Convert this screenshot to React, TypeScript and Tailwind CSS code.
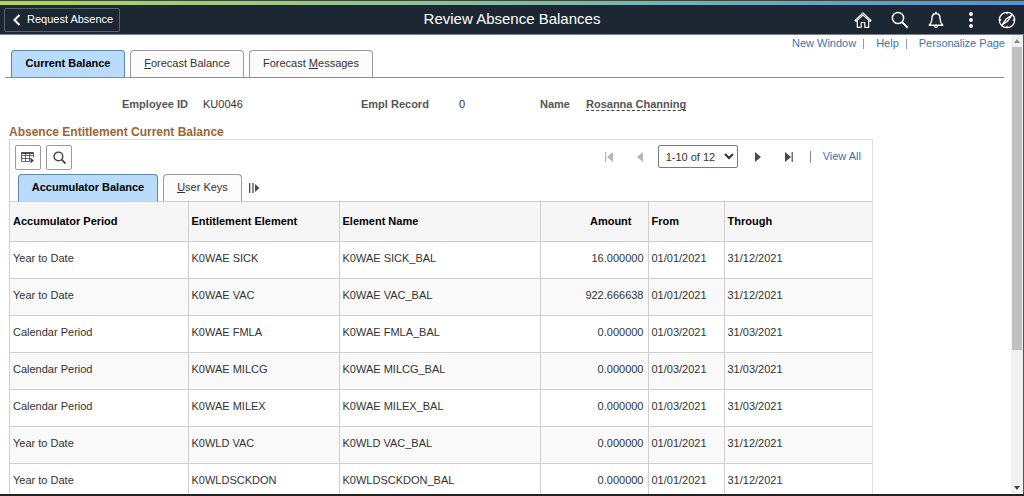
import { clsx } from "clsx";

type Balance = {
  period: string;
  element: string;
  name: string;
  amount: string;
  from: string;
  through: string;
};

const balances: Balance[] = [
  { period: "Year to Date", element: "K0WAE SICK", name: "K0WAE SICK_BAL", amount: "16.000000", from: "01/01/2021", through: "31/12/2021" },
  { period: "Year to Date", element: "K0WAE VAC", name: "K0WAE VAC_BAL", amount: "922.666638", from: "01/01/2021", through: "31/12/2021" },
  { period: "Calendar Period", element: "K0WAE FMLA", name: "K0WAE FMLA_BAL", amount: "0.000000", from: "01/03/2021", through: "31/03/2021" },
  { period: "Calendar Period", element: "K0WAE MILCG", name: "K0WAE MILCG_BAL", amount: "0.000000", from: "01/03/2021", through: "31/03/2021" },
  { period: "Calendar Period", element: "K0WAE MILEX", name: "K0WAE MILEX_BAL", amount: "0.000000", from: "01/03/2021", through: "31/03/2021" },
  { period: "Year to Date", element: "K0WLD VAC", name: "K0WLD VAC_BAL", amount: "0.000000", from: "01/01/2021", through: "31/12/2021" },
  { period: "Year to Date", element: "K0WLDSCKDON", name: "K0WLDSCKDON_BAL", amount: "0.000000", from: "01/01/2021", through: "31/12/2021" },
];

function Header() {
  return (
    <header className="shrink-0 border-b border-[#7b828a] bg-[#1c2733] text-white">
      <div className="h-[5px] border-t border-[#3c4a35] bg-linear-to-r from-[#b4d455] via-[#84bda6] to-[#5590dc]" />
      <div className="grid h-[29px] grid-cols-[1fr_auto_1fr] items-center">
        <button className="ml-1 flex h-6 w-[116px] items-center gap-1.5 rounded-xs border border-[#566370] pl-2 text-[11px]">
          <svg className="h-3 w-2" viewBox="0 0 8 12" fill="none" stroke="currentColor" strokeWidth="2">
            <path d="M6.5 1 1.5 6l5 5" />
          </svg>
          Request Absence
        </button>
        <h1 className="text-[15px]">Review Absence Balances</h1>
        <nav className="flex items-center justify-end gap-[19px] pr-2">
          <button aria-label="Home">
            <svg className="h-[18px] w-[18px]" viewBox="0 0 18 18" fill="none" stroke="currentColor" strokeWidth="1.2" strokeLinejoin="round">
              <path d="M1 9.4 9 2l8 7.4-1 1-7-6.3-7 6.3zM3.3 9.8v6.5h3.9v-4.8h3.6v4.8h3.9V9.8" />
            </svg>
          </button>
          <button aria-label="Search">
            <svg className="h-[18px] w-[18px]" viewBox="0 0 18 18" fill="none" stroke="currentColor" strokeWidth="1.5">
              <circle cx="7" cy="7" r="5.6" />
              <path d="m11 11 5.8 5.8" strokeWidth="1.8" />
            </svg>
          </button>
          <button aria-label="Notifications">
            <svg className="h-[18px] w-4" viewBox="0 0 16 18" fill="none" stroke="currentColor" strokeWidth="1.4" strokeLinejoin="round">
              <path d="M8 .8v1.7M1.3 14.3C3.3 12.3 4 10.5 4 7.3 4 4.3 5.7 2.5 8 2.5s4 1.8 4 4.8c0 3.2.7 5 2.7 7z" />
              <path d="M6.3 15.3a1.8 1.5 0 0 0 3.4 0" />
            </svg>
          </button>
          <button aria-label="Actions" className="px-1.5">
            <svg className="h-4 w-1" viewBox="0 0 4 16" fill="currentColor">
              <circle cx="2" cy="2" r="1.9" />
              <circle cx="2" cy="8" r="1.9" />
              <circle cx="2" cy="14" r="1.9" />
            </svg>
          </button>
          <button aria-label="Navigator">
            <svg className="h-[18px] w-[18px]" viewBox="0 0 18 18" fill="none" stroke="currentColor" strokeWidth="1.3">
              <circle cx="9" cy="9" r="7.7" />
              <path d="M9 1.4v1.8M9 14.8v1.8M1.4 9h1.8M14.8 9h1.8" />
              <path d="m14 4-4.1 5.9L4 14l4.1-5.9z" strokeLinejoin="round" />
            </svg>
          </button>
        </nav>
      </div>
    </header>
  );
}

function PageTabs() {
  const tab = "h-[27px] rounded-t-sm border border-b-0 pb-0.5 text-[11px]";
  return (
    <div className="ml-[5px] mr-[7px] flex gap-[5px] border-b border-[#8c8c8c] pl-1.5" role="tablist">
      <button role="tab" aria-selected="true" className={clsx(tab, "w-[114px] border-[#5d86b0] bg-[#b9dcfd] font-bold text-black")}>
        Current Balance
      </button>
      <button role="tab" aria-selected="false" className={clsx(tab, "w-[114px] border-[#9b9b9b] bg-[#fbfbfb]")}>
        <u>F</u>orecast Balance
      </button>
      <button role="tab" aria-selected="false" className={clsx(tab, "w-[124px] border-[#9b9b9b] bg-[#fbfbfb]")}>
        Forecast <u>M</u>essages
      </button>
    </div>
  );
}

function Pager() {
  return (
    <div className="flex items-center pb-0.5 text-[11px]">
      <button aria-label="First rows" disabled className="text-[#b5b5b5]">
        <svg className="h-2.5 w-2.5" viewBox="0 0 10 10" fill="currentColor">
          <path d="M1 0h1.2v10H1zM9 0v10L3 5z" />
        </svg>
      </button>
      <button aria-label="Previous rows" disabled className="ml-[22px] text-[#b5b5b5]">
        <svg className="h-2.5 w-2" viewBox="0 0 8 10" fill="currentColor">
          <path d="M7 0v10L1 5z" />
        </svg>
      </button>
      <select aria-label="Rows shown" className="ml-[14px] h-[23px] w-20 rounded-xs border border-[#7a7a7a] bg-white pl-[3px]">
        <option>1-10 of 12</option>
        <option>11-12 of 12</option>
      </select>
      <button aria-label="Next rows" className="ml-4 text-[#4a4a4a]">
        <svg className="h-2.5 w-2" viewBox="0 0 8 10" fill="currentColor">
          <path d="M1 0v10l6-5z" />
        </svg>
      </button>
      <button aria-label="Last rows" className="ml-[22px] text-[#4a4a4a]">
        <svg className="h-2.5 w-2.5" viewBox="0 0 10 10" fill="currentColor">
          <path d="M1 0v10l6-5zM7.6 0h1.2v10H7.6z" />
        </svg>
      </button>
      <span className="ml-4 h-3 border-l border-[#8a8a8a]" />
      <a href="#" className="ml-3 text-[#3b73ab]">View All</a>
    </div>
  );
}

function GridToolbar() {
  const tool = "flex h-[25px] w-[26px] items-center justify-center rounded-xs border border-[#9b9b9b] bg-white text-[#444]";
  return (
    <div className="flex items-center justify-between pl-[5px] pr-[11px] pt-[5px]">
      <div className="flex gap-[5px]">
        <button aria-label="Grid actions" className={tool}>
          <svg className="h-3 w-[14px]" viewBox="0 0 14 12" fill="none" stroke="currentColor">
            <path d="M8.5 9.5H.5v-9h12v5M.5 3.5h12M.5 6.5h9M4.5 1v8.5M8.5 1v8.5" strokeWidth=".8" />
            <path d="M.5 1.2h12" strokeWidth="1.6" />
            <path d="M9.5 5.5v6l3.5-3z" fill="currentColor" stroke="none" />
          </svg>
        </button>
        <button aria-label="Find" className={tool}>
          <svg className="h-[13px] w-[13px]" viewBox="0 0 12 12" fill="none" stroke="currentColor" strokeWidth="1.3">
            <circle cx="5" cy="5" r="4" />
            <path d="m8 8 3.5 3.5" strokeWidth="1.7" />
          </svg>
        </button>
      </div>
      <Pager />
    </div>
  );
}

function GridTabs() {
  const tab = "h-[27px] rounded-t-sm border border-b-0 pb-0.5 text-[11px]";
  return (
    <div className="mt-1 flex gap-[5px] pl-2" role="tablist">
      <button role="tab" aria-selected="true" className={clsx(tab, "w-[140px] border-[#5d86b0] bg-[#b9dcfd] font-bold text-black")}>
        Accumulator Balance
      </button>
      <button role="tab" aria-selected="false" className={clsx(tab, "w-[79px] border-[#9b9b9b] bg-[#fbfbfb]")}>
        <u>U</u>ser Keys
      </button>
      <button aria-label="Show all columns" className="ml-0.5 text-[#4a4a4a]">
        <svg className="h-2.5 w-[11px]" viewBox="0 0 11 10" fill="currentColor">
          <path d="M0 0h1.3v10H0zM3.3 0h1.3v10H3.3zM6 1v8l4.5-4z" />
        </svg>
      </button>
    </div>
  );
}

function BalanceTable() {
  const cell = "border border-[#cfcfcf] pl-[3px] first:border-l-0 last:border-r-0";
  return (
    <table className="w-full table-fixed border-collapse text-left text-[11px]">
      <colgroup>
        <col className="w-[178px]" />
        <col className="w-[151px]" />
        <col className="w-[201px]" />
        <col className="w-[108px]" />
        <col className="w-[76px]" />
        <col />
      </colgroup>
      <thead>
        <tr className="h-10 bg-[#f6f6f6] text-black">
          <th className={cell}>Accumulator Period</th>
          <th className={cell}>Entitlement Element</th>
          <th className={cell}>Element Name</th>
          <th className={clsx(cell, "pr-4 text-right")}>Amount</th>
          <th className={cell}>From</th>
          <th className={clsx(cell, "pl-1")}>Through</th>
        </tr>
      </thead>
      <tbody>
        {balances.map((b) => (
          <tr key={b.element} className="h-[37px] even:bg-[#f9f9f9] *:pb-1">
            <td className={cell}>{b.period}</td>
            <td className={cell}>{b.element}</td>
            <td className={cell}>{b.name}</td>
            <td className={clsx(cell, "pr-1 text-right")}>{b.amount}</td>
            <td className={cell}>{b.from}</td>
            <td className={clsx(cell, "pl-1")}>{b.through}</td>
          </tr>
        ))}
      </tbody>
    </table>
  );
}

function ScrollRail() {
  return (
    <div className="flex w-3 shrink-0 flex-col items-center bg-[#f1f1f1]" aria-hidden="true">
      <svg className="my-1 h-1 w-1.5 shrink-0 text-[#8a8a8a]" viewBox="0 0 6 4" fill="currentColor">
        <path d="M0 4h6L3 0z" />
      </svg>
      <div className="h-[66%] w-2.5 bg-[#c1c1c1]" />
      <svg className="mb-1 mt-auto h-1 w-1.5 shrink-0 text-[#444]" viewBox="0 0 6 4" fill="currentColor">
        <path d="M0 0h6L3 4z" />
      </svg>
    </div>
  );
}

export default function App() {
  return (
    <div className="flex h-screen flex-col overflow-hidden border-b-2 border-[#222] bg-white font-['Liberation_Sans',Arial,sans-serif] text-[11px] text-[#333]">
      <Header />
      <div className="flex min-h-0 flex-1 border-r border-[#555]">
        <main className="min-w-0 flex-1 overflow-hidden">
          <nav className="flex h-[15px] items-center justify-end pr-1.5 pt-0.5 text-[#3b73ab]">
            <a href="#">New Window</a>
            <span className="ml-[7px] h-2.5 border-l border-[#999]" />
            <a href="#" className="ml-3">Help</a>
            <span className="ml-[7px] h-2.5 border-l border-[#999]" />
            <a href="#" className="ml-3">Personalize Page</a>
          </nav>
          <PageTabs />

          {/* Employee details */}
          <dl className="flex h-[47px] items-center pl-[122px] pt-1.5 text-[#333]">
            <dt className="w-[81px] font-bold text-[#555]">Employee ID</dt>
            <dd className="w-[158px]">KU0046</dd>
            <dt className="w-[98px] font-bold text-[#555]">Empl Record</dt>
            <dd className="w-[81px]">0</dd>
            <dt className="w-[46px] font-bold text-[#555]">Name</dt>
            <dd className="border-b border-dashed border-[#444] font-bold leading-3 text-[#555]">Rosanna Channing</dd>
          </dl>

          <section className="w-full max-w-[873px] pl-[9px]">
            <h2 className="h-[14px] text-[12px] font-bold leading-[14px] text-[#996633]">Absence Entitlement Current Balance</h2>
            <div className="border border-[#e0e0e0] border-l-[#cfcfcf]">
              <GridToolbar />
              <GridTabs />
              <BalanceTable />
            </div>
          </section>
        </main>
        <ScrollRail />
      </div>
    </div>
  );
}
